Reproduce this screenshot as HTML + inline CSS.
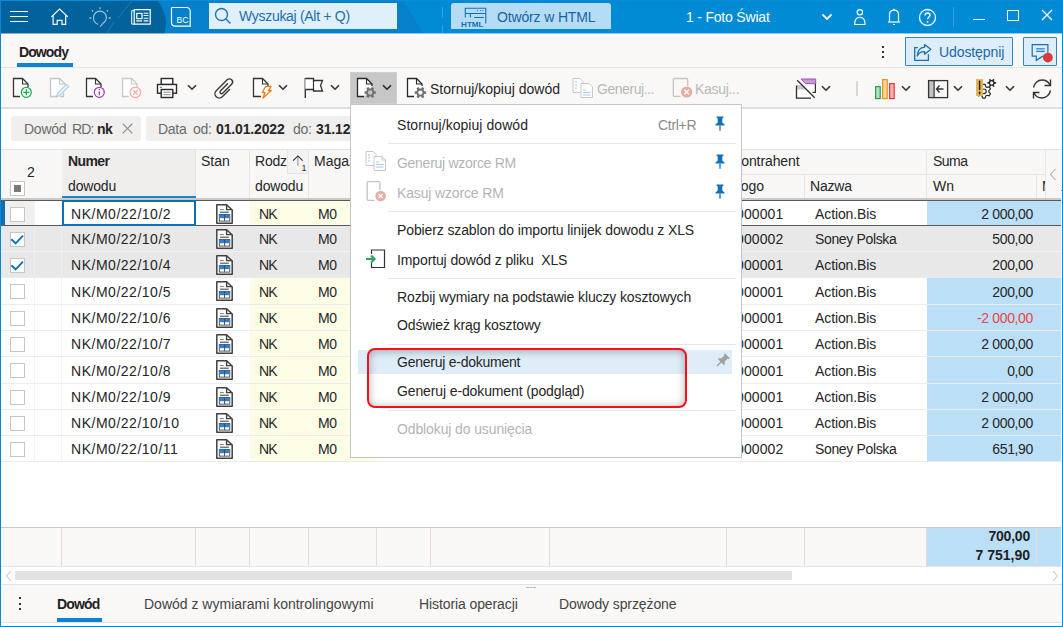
<!DOCTYPE html>
<html><head><meta charset="utf-8">
<style>
*{box-sizing:border-box;margin:0;padding:0}
html,body{width:1063px;height:627px;overflow:hidden;background:#fff;font-family:"Liberation Sans",sans-serif;font-size:14px;color:#262626}
.a{position:absolute}
.t{position:absolute;white-space:nowrap;line-height:1}
svg{position:absolute;overflow:visible}
</style></head><body>
<!-- window borders -->
<div class="a" style="left:0;top:0;width:1px;height:627px;background:#0a86d6;z-index:50"></div>
<div class="a" style="left:1062px;top:0;width:1px;height:627px;background:#0a86d6;z-index:50"></div>
<div class="a" style="left:0;top:626px;width:1063px;height:1px;background:#0a86d6;z-index:50"></div>

<!-- TOP BAR -->
<div class="a" style="left:0;top:0;width:1063px;height:33px;background:#008bd4"></div><div class="a" style="left:0;top:33px;width:1063px;height:1px;background:#8cc8ec"></div>
<svg style="left:0;top:0" width="430" height="34"><path d="M0 0 H403 L422.5 33 H0 Z" fill="#0680c8"/><path d="M0 1 H158 C163 8 166 16 166 22 C166 27 165 30 164.5 33 H0 Z" fill="#02629b"/><path d="M0 33 H164.5 V34 H0 Z" fill="#84aecb"/>
<path d="M132 1 L118 18 M114 22 L107 33" stroke="#2a78ad" stroke-width="1"/></svg>
<div class="a" style="left:0;top:0;width:1063px;height:1px;background:#0a8ad8"></div>
<!-- hamburger -->
<div class="a" style="left:10px;top:11px;width:18px;height:1px;background:#fff"></div>
<div class="a" style="left:10px;top:16px;width:18px;height:1px;background:#fff"></div>
<div class="a" style="left:10px;top:21px;width:18px;height:1px;background:#fff"></div>

<!-- home -->
<svg style="left:44px;top:2px" width="30" height="30" viewBox="0 0 30 30"><path d="M7.3 14.8 L15.6 7.1 L23.9 14.8 M9.1 13.3 V22.4 H13.2 V18.3 H18 V22.4 H21.7 V13.3" fill="none" stroke="#fff" stroke-width="1.15" stroke-linejoin="miter"/></svg>
<!-- lightbulb -->
<svg style="left:84px;top:2px" width="32" height="30" viewBox="0 0 32 30"><g fill="none" stroke="#9ac2dd" stroke-width="1.15"><path d="M14.2 22.4 C11.3 21.6 9.5 18.9 9.5 15.6 C9.5 12 12.4 9.1 15.9 9.1 C19.5 9.1 22.4 12 22.4 15.6 C22.4 18 21 20 19 21.2 L16.2 24.6"/></g><g stroke="#9ac2dd" stroke-width="1.3"><path d="M15.9 5.2 V7.3 M8 8.2 L9.1 9.5 M23.9 8.2 L22.8 9.5 M5.4 16 H7.4 M24.6 16 H26.6"/></g></svg>
<!-- news -->
<svg style="left:124px;top:2px" width="30" height="30" viewBox="0 0 30 30"><g fill="none" stroke="#fff" stroke-width="1.2"><path d="M10.2 7.7 H26.2 V22.1 H10.2 Z"/><path d="M10.2 8.7 H7.7 V22.1 H10.2" stroke-width="1"/><rect x="12.8" y="11.4" width="5.2" height="5.2"/><path d="M19.6 11.2 H24.4 M19.6 13.5 H24.4 M19.6 16.3 H24.4 M12.2 18.9 H18 M19.6 18.9 H24.4" stroke-width="1.1"/></g></svg>
<!-- BC -->
<svg style="left:170px;top:6px" width="22" height="22" viewBox="0 0 22 22"><path d="M2.6 1.5 H16.3 C18.7 1.5 20.2 3 20.2 5.4 V20.1 H5.4 C3 20.1 1.5 18.6 1.5 16.2 V2.6 C1.5 1.9 1.9 1.5 2.6 1.5 Z" fill="none" stroke="#fff" stroke-width="1.2"/><text x="6.4" y="16.6" font-family="Liberation Sans" font-size="9" fill="#fff" textLength="12" lengthAdjust="spacingAndGlyphs">BC</text></svg>
<!-- search -->
<div class="a" style="left:209px;top:3px;width:188px;height:26px;background:#dff0fb"></div>
<svg style="left:214px;top:7px" width="18" height="18" viewBox="0 0 18 18"><circle cx="7.5" cy="7.5" r="6" fill="none" stroke="#1f74b6" stroke-width="1.4"/><path d="M12 12 L16.5 16.5" stroke="#1f74b6" stroke-width="1.5"/></svg>
<div class="t" style="left:239px;top:9px;font-size:14px;color:#1e6fae;letter-spacing:-0.3px">Wyszukaj (Alt + Q)</div>

<div class="a" style="left:442px;top:7px;width:1px;height:11px;background:#3ba0de"></div><div class="a" style="left:442px;top:25px;width:1px;height:8px;background:#3ba0de"></div>
<!-- Otworz w HTML -->
<div class="a" style="left:451px;top:3px;width:160px;height:26px;background:#b5dcf4;border-radius:3px 3px 0 0"></div>
<svg style="left:455px;top:3px" width="40" height="28" viewBox="0 0 40 28"><g fill="none" stroke="#1070b5" stroke-width="1.1"><path d="M10.3 14.5 V5.3 H30.8 V20.5"/><path d="M10.3 10.5 H30.8 M15.4 10.5 V14.5 M19.2 14.5 H28.8"/></g><g fill="#1070b5"><circle cx="22.5" cy="7.6" r="0.55"/><circle cx="25.5" cy="7.6" r="0.55"/><circle cx="27.8" cy="7.6" r="0.55"/></g><text x="6" y="23.7" font-family="Liberation Sans" font-size="7.8" font-weight="700" fill="#1070b5" textLength="22.6" lengthAdjust="spacingAndGlyphs">HTML</text></svg>
<div class="t" style="left:497px;top:10px;font-size:14px;color:#1565a3;letter-spacing:-0.15px">Otwórz w HTML</div>
<!-- company -->
<div class="t" style="left:686px;top:10px;font-size:14px;color:#fff;letter-spacing:-0.2px">1 - Foto Świat</div>
<svg style="left:821px;top:13px" width="12" height="8" viewBox="0 0 12 8"><path d="M1.5 1.5 L6 6 L10.5 1.5" fill="none" stroke="#fff" stroke-width="1.8"/></svg>
<!-- person -->
<svg style="left:848px;top:5px" width="20" height="22" viewBox="0 0 20 22"><g fill="none" stroke="#fff" stroke-width="1.15"><circle cx="11.85" cy="7.3" r="2.7"/><path d="M6.6 19.5 C6.6 15 8.6 12.3 11.9 12.3 C15.2 12.3 17.1 15 17.1 19.5 Z"/></g></svg>
<!-- bell -->
<svg style="left:884px;top:5px" width="20" height="22" viewBox="0 0 20 22"><g fill="none" stroke="#fff" stroke-width="1.15"><path d="M5.5 16.8 V9.5 C5.5 6.5 7.5 5.1 10 5.1 C12.5 5.1 14.5 6.5 14.5 9.5 V16.8"/></g><path d="M4 16.4 H16 V17.6 H4 Z" fill="#fff"/><path d="M10 3.6 L10.9 5 H9.1 Z" fill="#fff"/><path d="M9 19.5 H11" stroke="#fff" stroke-width="1"/></svg>
<!-- help -->
<svg style="left:918px;top:8px" width="19" height="19" viewBox="0 0 19 19"><circle cx="9.5" cy="9.5" r="8" fill="none" stroke="#fff" stroke-width="1.3"/><path d="M7 7.5 C7 5.8 8 5 9.5 5 C11 5 12 5.8 12 7.2 C12 8.8 9.6 9.3 9.6 11.3" fill="none" stroke="#fff" stroke-width="1.3"/><circle cx="9.6" cy="13.8" r="0.9" fill="#fff"/></svg>
<div class="a" style="left:953px;top:7px;width:1px;height:20px;background:#3a9ddc"></div>
<!-- window controls -->
<div class="a" style="left:973px;top:19px;width:12px;height:1px;background:#fff"></div>
<div class="a" style="left:1007px;top:10px;width:12px;height:11px;border:1.3px solid #fff"></div>
<svg style="left:1041px;top:9px" width="12" height="12" viewBox="0 0 12 12"><path d="M1 1 L11 11 M11 1 L1 11" stroke="#fff" stroke-width="1.3"/></svg>

<!-- TAB ROW -->
<div class="a" style="left:1px;top:34px;width:1061px;height:73px;background:#f9f8f7"></div><div class="a" style="left:1px;top:34px;width:1061px;height:1px;background:#fffdf9"></div>
<div class="a" style="left:1px;top:67px;width:1061px;height:1px;background:#e6e5e4"></div>
<div class="t" style="left:19px;top:45px;font-size:14px;font-weight:700;color:#212121;letter-spacing:-0.9px">Dowody</div>
<div class="a" style="left:17px;top:63px;width:56px;height:4px;background:#0a84d2"></div>
<!-- kebab -->
<div class="a" style="left:882px;top:46px;width:2px;height:2px;background:#333"></div>
<div class="a" style="left:882px;top:51px;width:2px;height:2px;background:#333"></div>
<div class="a" style="left:882px;top:56px;width:2px;height:2px;background:#333"></div>
<!-- Udostepnij -->
<div class="a" style="left:905px;top:37px;width:108px;height:29px;background:#ddeefa;border:1px solid #2f86c4;border-radius:1px"></div>
<svg style="left:905px;top:36px" width="30" height="30" viewBox="0 0 30 30"><g fill="none" stroke="#1a6fb0" stroke-width="1.3" stroke-linejoin="miter"><path d="M12.8 11.6 H9.7 V24.4 H23.4 V18.2"/><path d="M19.6 8.6 L25.8 13.3 L19.6 18.2 V15.6 C16 15.4 13.7 16.6 12.3 20 C12.5 15 15.2 11.6 19.6 11.2 Z" stroke-linejoin="round"/></g></svg>
<div class="t" style="left:939px;top:45px;font-size:14px;color:#1a68a8;letter-spacing:-0.1px">Udostępnij</div>
<!-- chat -->
<div class="a" style="left:1023px;top:37px;width:34px;height:29px;background:#ddeefa;border:1px solid #2f86c4;border-radius:1px"></div>
<svg style="left:1030px;top:43px" width="24" height="22" viewBox="0 0 24 22"><g fill="none" stroke="#1a6fb0" stroke-width="1.2" stroke-linejoin="miter"><path d="M2.2 1.6 H17.9 V13.2 H12.8 L6.3 17.3 V13.2 H2.2 Z"/></g><path d="M6.2 5.9 H14.8 M6.2 8.4 H14.8" stroke="#2a7bbb" stroke-width="1.1"/><circle cx="17.9" cy="14.6" r="4.9" fill="#d93a3a"/></svg>

<!-- TOOLBAR -->
<div class="a" style="left:1px;top:107px;width:1061px;height:2px;background:#dfdfdf"></div>


<!-- TOOLBAR -->
<div class="a" style="left:1px;top:107px;width:1061px;height:2px;background:#dfdfdf;"></div>
<svg style="left:12px;top:77px;" width="24" height="22" viewBox="0 0 24 22"><path d="M8 19.5 H1.5 V1.5 H10.5 L16 7 V10" fill="#fff" stroke="#333" stroke-width="1.3"/><path d="M10.5 1.5 V7 H16" fill="none" stroke="#333" stroke-width="1.1"/><circle cx="14.3" cy="15.3" r="5" fill="#fff" stroke="#1aaa4a" stroke-width="1.2"/><path d="M14.3 12.3 V18.3 M11.3 15.3 H17.3" stroke="#1aaa4a" stroke-width="1.35"/></svg>
<svg style="left:49px;top:77px;" width="24" height="22" viewBox="0 0 24 22"><path d="M7 19.5 H1.5 V1.5 H10.5 L16 7 V8 M11 19.5 H14.5 V16" fill="#fff" stroke="#c4c4c4" stroke-width="1.3"/><path d="M10.5 1.5 V7 H16" fill="none" stroke="#c4c4c4" stroke-width="1.1"/><path d="M7.5 20 L8.5 16.5 L17.5 7.5 L19.5 9.5 L10.5 18.5 Z" fill="#fff" stroke="#a9d0ee" stroke-width="1.3" stroke-linejoin="round"/></svg>
<svg style="left:85px;top:77px;" width="24" height="22" viewBox="0 0 24 22"><path d="M8 19.5 H1.5 V1.5 H10.5 L16 7 V10" fill="#fff" stroke="#333" stroke-width="1.3"/><path d="M10.5 1.5 V7 H16" fill="none" stroke="#333" stroke-width="1.1"/><circle cx="14.3" cy="15.3" r="5" fill="#fff" stroke="#a23db5" stroke-width="1.2"/><path d="M14.3 14.3 V18.2" stroke="#a23db5" stroke-width="1.3"/><circle cx="14.3" cy="12.6" r="0.75" fill="#a23db5"/></svg>
<svg style="left:121px;top:77px;" width="24" height="22" viewBox="0 0 24 22"><path d="M8 19.5 H1.5 V1.5 H10.5 L16 7 V10" fill="#fff" stroke="#c8c8c8" stroke-width="1.3"/><path d="M10.5 1.5 V7 H16" fill="none" stroke="#c8c8c8" stroke-width="1.1"/><circle cx="14.4" cy="15.4" r="5.2" fill="#fff" stroke="#f2a9a9" stroke-width="1.3"/><path d="M12.2 13.2 L16.6 17.6 M16.6 13.2 L12.2 17.6" stroke="#f2a9a9" stroke-width="1.3"/></svg>
<svg style="left:156px;top:77px;" width="22" height="22" viewBox="0 0 22 22"><g fill="#fff" stroke="#2b2b2b" stroke-width="1.4"><rect x="5.2" y="1.5" width="11.6" height="6"/><rect x="1.5" y="7.5" width="19" height="8.7"/><rect x="5.2" y="12.5" width="11.6" height="8"/></g><path d="M7.3 15.2 H14.7 M7.3 17.7 H14.7" stroke="#8a8a8a" stroke-width="1"/><rect x="3.8" y="9.8" width="2" height="1.1" fill="#1e7fd0"/></svg>
<svg style="left:187px;top:84px;" width="10" height="7" viewBox="0 0 10 7"><path d="M1 1.2 L5 5.2 L9 1.2" fill="none" stroke="#333" stroke-width="1.6"/></svg>
<svg style="left:210px;top:74px;" width="30" height="28" viewBox="0 0 30 28"><path transform="matrix(0.7071 0.7071 -0.7071 0.7071 19.4 3.6)" d="M8.6 8.35 V18.6 A4.3 4.3 0 0 1 0 18.6 V3.15 A3.15 3.15 0 0 1 6.3 3.15 V15.85 A1.6 1.6 0 0 1 3.1 15.85 V5.75" fill="none" stroke="#3a3a3a" stroke-width="1.4" stroke-linecap="round"/></svg>
<svg style="left:252px;top:77px;" width="22" height="22" viewBox="0 0 22 22"><path d="M9 19.5 H1.5 V1.5 H10.5 L16 7 V9" fill="#fff" stroke="#333" stroke-width="1.3"/><path d="M10.5 1.5 V7 H16" fill="none" stroke="#333" stroke-width="1.1"/><path d="M13.5 9.5 H19 L16.5 13.5 H19.3 L11 21 L13 15.5 H10.3 Z" fill="#fff" stroke="#ee7d1e" stroke-width="1.3" stroke-linejoin="round"/></svg>
<svg style="left:278px;top:84px;" width="10" height="7" viewBox="0 0 10 7"><path d="M1 1.2 L5 5.2 L9 1.2" fill="none" stroke="#333" stroke-width="1.6"/></svg>
<svg style="left:303px;top:77px;" width="22" height="22" viewBox="0 0 22 22"><path d="M2.3 1 V21" stroke="#333" stroke-width="1.4"/><path d="M2.3 1.5 H10.5 V3.5 H19.5 L17.5 8.5 L19.5 14 H10.5 V12.5 H2.3" fill="#fff" stroke="#333" stroke-width="1.3" stroke-linejoin="miter"/><path d="M10.5 3.5 V12.5" stroke="#333" stroke-width="1.2"/></svg>
<svg style="left:330px;top:84px;" width="10" height="7" viewBox="0 0 10 7"><path d="M1 1.2 L5 5.2 L9 1.2" fill="none" stroke="#333" stroke-width="1.6"/></svg>
<div class="a" style="left:350px;top:72px;width:47px;height:32px;background:#c7c7c7;border:1px solid #cfcfcf"></div>
<svg style="left:356px;top:77px;" width="24" height="24" viewBox="0 0 24 24"><path d="M8 19.5 H1.5 V1.5 H10.5 L16 7 V9" fill="#fff" stroke="#262626" stroke-width="1.3"/><path d="M10.5 1.5 V7 H16" fill="none" stroke="#262626" stroke-width="1.1"/><g transform="translate(14.2 15.5)"><circle r="3.1" fill="none" stroke="#707070" stroke-width="1.7999999999999998"/><rect x="-1.25" y="-5.7" width="2.5" height="2.3000000000000003" fill="#707070" transform="rotate(30.0)"/><rect x="-1.25" y="-5.7" width="2.5" height="2.3000000000000003" fill="#707070" transform="rotate(90.0)"/><rect x="-1.25" y="-5.7" width="2.5" height="2.3000000000000003" fill="#707070" transform="rotate(150.0)"/><rect x="-1.25" y="-5.7" width="2.5" height="2.3000000000000003" fill="#707070" transform="rotate(210.0)"/><rect x="-1.25" y="-5.7" width="2.5" height="2.3000000000000003" fill="#707070" transform="rotate(270.0)"/><rect x="-1.25" y="-5.7" width="2.5" height="2.3000000000000003" fill="#707070" transform="rotate(330.0)"/></g></svg>
<svg style="left:382px;top:84px;" width="10" height="7" viewBox="0 0 10 7"><path d="M1 1.2 L5 5.2 L9 1.2" fill="none" stroke="#262626" stroke-width="1.6"/></svg>
<svg style="left:406px;top:77px;" width="24" height="24" viewBox="0 0 24 24"><path d="M8 19.5 H1.5 V1.5 H10.5 L16 7 V9" fill="#fff" stroke="#262626" stroke-width="1.3"/><path d="M10.5 1.5 V7 H16" fill="none" stroke="#262626" stroke-width="1.1"/><g transform="translate(14.4 15.6)"><circle r="3.1" fill="none" stroke="#707070" stroke-width="1.7999999999999998"/><rect x="-1.25" y="-5.7" width="2.5" height="2.3000000000000003" fill="#707070" transform="rotate(30.0)"/><rect x="-1.25" y="-5.7" width="2.5" height="2.3000000000000003" fill="#707070" transform="rotate(90.0)"/><rect x="-1.25" y="-5.7" width="2.5" height="2.3000000000000003" fill="#707070" transform="rotate(150.0)"/><rect x="-1.25" y="-5.7" width="2.5" height="2.3000000000000003" fill="#707070" transform="rotate(210.0)"/><rect x="-1.25" y="-5.7" width="2.5" height="2.3000000000000003" fill="#707070" transform="rotate(270.0)"/><rect x="-1.25" y="-5.7" width="2.5" height="2.3000000000000003" fill="#707070" transform="rotate(330.0)"/></g></svg>
<div class="t" style="left:430px;top:82px;color:#262626;">Stornuj/kopiuj dowód</div>
<svg style="left:572px;top:78px;" width="22" height="21" viewBox="0 0 22 21"><path d="M8.5 14.5 H1 V0.5 H8 L11 3.5 V5" fill="#fff" stroke="#c8c8c8" stroke-width="1"/><path d="M9 5.5 H17 L20.5 9 V19.5 H9 Z" fill="#fff" stroke="#c8c8c8" stroke-width="1"/><path d="M3 4 H5 M3 7 H5 M3 10 H5" stroke="#a8c8e8" stroke-width="1"/><path d="M11 12 H14 M11 14.5 H18.5 M11 17 H18.5" stroke="#a8c8e8" stroke-width="1.1"/></svg>
<div class="t" style="left:597px;top:82px;color:#b8b8b8;letter-spacing:-0.45px;">Generuj...</div>
<svg style="left:672px;top:77px;" width="22" height="22" viewBox="0 0 22 22"><path d="M8.5 19.3 H2.5 C1.7 19.3 1.3 18.9 1.3 18 V2.7 C1.3 1.9 1.7 1.5 2.5 1.5 H14.5 C15.3 1.5 15.7 1.9 15.7 2.7 V9" fill="none" stroke="#c4c4c4" stroke-width="1.3"/><circle cx="14.6" cy="15" r="5.6" fill="#e9aba4"/><path d="M12.4 12.8 L16.8 17.2 M16.8 12.8 L12.4 17.2" stroke="#fff" stroke-width="1.4"/></svg>
<div class="t" style="left:695px;top:82px;color:#b8b8b8;letter-spacing:-0.3px;">Kasuj...</div>
<svg style="left:795px;top:78px;" width="22" height="22" viewBox="0 0 22 22"><path d="M1.5 7 V20 H20 V1.5 H6 Z" fill="#fff"/><path d="M1.5 7 H7.5 L11 11.5 H1.5 Z" fill="#c8c8c8"/><path d="M1.5 7.5 V20.1 H16" fill="none" stroke="#2d2d2d" stroke-width="1.3"/><path d="M20.4 5.5 V14.4 H17.5" fill="none" stroke="#2d2d2d" stroke-width="1.2"/><path d="M6.2 1 H20.7 V5.7 H10.5 Z" fill="#c99bd2" stroke="#a040b0" stroke-width="0.9"/><path d="M2.2 2.2 L19.7 19.7" stroke="#2d2d2d" stroke-width="1.25"/></svg>
<svg style="left:821px;top:85px;" width="10" height="7" viewBox="0 0 10 7"><path d="M1 1.2 L5 5.2 L9 1.2" fill="none" stroke="#333" stroke-width="1.6"/></svg>
<div class="a" style="left:856px;top:81px;width:2px;height:15px;background:#d6d6d6;"></div>
<svg style="left:874px;top:78px;" width="22" height="22" viewBox="0 0 22 22"><rect x="1.6" y="8.6" width="4.6" height="12" fill="#b5dfbf" stroke="#1fa64a" stroke-width="1.2"/><rect x="8.6" y="1.6" width="4.6" height="19" fill="#fbd98c" stroke="#ef8b2c" stroke-width="1.2"/><rect x="15.6" y="5.6" width="4.6" height="15" fill="#f4b0b0" stroke="#e03a3a" stroke-width="1.2"/></svg>
<svg style="left:901px;top:85px;" width="10" height="7" viewBox="0 0 10 7"><path d="M1 1.2 L5 5.2 L9 1.2" fill="none" stroke="#333" stroke-width="1.6"/></svg>
<svg style="left:927px;top:79px;" width="22" height="20" viewBox="0 0 22 20"><rect x="1.6" y="1.6" width="5.5" height="17" fill="#c4c4c4"/><rect x="1.6" y="1.6" width="19" height="17" fill="none" stroke="#333" stroke-width="1.3"/><path d="M7.1 1.6 V18.6" stroke="#333" stroke-width="1.2"/><path d="M9.5 10 H16.5 M12.5 6.5 L9.5 10 L12.5 13.5" fill="none" stroke="#333" stroke-width="1.3"/></svg>
<svg style="left:953px;top:85px;" width="10" height="7" viewBox="0 0 10 7"><path d="M1 1.2 L5 5.2 L9 1.2" fill="none" stroke="#333" stroke-width="1.6"/></svg>
<svg style="left:975px;top:78px;" width="24" height="22" viewBox="0 0 24 22"><path d="M7.03 8.66 L7.68 6.41 L10.12 6.41 L10.77 8.66 L11.98 9.36 L14.26 8.80 L15.48 10.91 L13.85 12.60 L13.85 14.00 L15.48 15.69 L14.26 17.80 L11.98 17.24 L10.77 17.94 L10.12 20.19 L7.68 20.19 L7.03 17.94 L5.82 17.24 L3.54 17.80 L2.32 15.69 L3.95 14.00 L3.95 12.60 L2.32 10.91 L3.54 8.80 L5.82 9.36 Z" fill="#fff" stroke="#2a2a2a" stroke-width="1.2" stroke-linejoin="round"/><circle cx="8.9" cy="13.3" r="2.3" fill="none" stroke="#2a2a2a" stroke-width="1.2"/><rect x="1" y="1.1" width="7.1" height="16.8" fill="#e3b558"/><path d="M4.6 3.2 V11.5" stroke="#262626" stroke-width="1.5" stroke-linecap="round"/><path d="M4.6 14.3 V15.8" stroke="#262626" stroke-width="1.5" stroke-linecap="round"/><path d="M17.22 1.95 L18.42 0.85 L19.35 1.39 L19.00 2.97 L19.52 3.87 L21.07 4.36 L21.07 5.44 L19.52 5.93 L19.00 6.83 L19.35 8.41 L18.42 8.95 L17.22 7.85 L16.18 7.85 L14.98 8.95 L14.05 8.41 L14.40 6.83 L13.88 5.93 L12.33 5.44 L12.33 4.36 L13.88 3.87 L14.40 2.97 L14.05 1.39 L14.98 0.85 L16.18 1.95 Z" fill="#2a2a2a"/><circle cx="16.7" cy="4.9" r="1.6" fill="#f9f8f7"/></svg>
<svg style="left:1005px;top:85px;" width="10" height="7" viewBox="0 0 10 7"><path d="M1 1.2 L5 5.2 L9 1.2" fill="none" stroke="#333" stroke-width="1.6"/></svg>
<svg style="left:1031px;top:78px;" width="22" height="22" viewBox="0 0 22 22"><g fill="none" stroke="#333" stroke-width="1.4"><path d="M2.5 9.5 C3.3 5.3 6.8 2 11 2 C14.5 2 17.5 4 19 7 M19.5 1.5 V7.5 H13.5"/><path d="M19.5 12.5 C18.7 16.7 15.2 20 11 20 C7.5 20 4.5 18 3 15 M2.5 20.5 V14.5 H8.5"/></g></svg>

<!-- CHIPS -->
<div class="a" style="left:11px;top:116px;width:130px;height:25px;background:#f0efee;border-radius:3px"></div>
<div class="t" style="left:24px;top:122px;color:#6b6b6b;letter-spacing:-0.25px;">Dowód</div>
<div class="t" style="left:72px;top:122px;color:#6b6b6b;letter-spacing:-0.8px;">RD:</div>
<div class="t" style="left:97px;top:122px;color:#262626;letter-spacing:-0.5px;font-weight:700;">nk</div>
<svg style="left:122px;top:123px;" width="11" height="11" viewBox="0 0 11 11"><path d="M0.7 0.7 L10.3 10.3 M10.3 0.7 L0.7 10.3" stroke="#8a8a8a" stroke-width="1.2"/></svg>
<div class="a" style="left:146px;top:116px;width:215px;height:25px;background:#f0efee;border-radius:3px"></div>
<div class="t" style="left:158px;top:122px;color:#6b6b6b;letter-spacing:-0.3px;">Data</div>
<div class="t" style="left:193px;top:122px;color:#6b6b6b;letter-spacing:-0.3px;">od:</div>
<div class="t" style="left:216px;top:122px;color:#262626;letter-spacing:-0.15px;font-weight:700;">01.01.2022</div>
<div class="t" style="left:293px;top:122px;color:#6b6b6b;letter-spacing:-0.3px;">do:</div>
<div class="t" style="left:316px;top:122px;color:#262626;letter-spacing:-0.15px;font-weight:700;">31.12.2022</div>

<!-- TABLE HEADER -->
<div class="a" style="left:1px;top:149px;width:1061px;height:1px;background:#e2e2e2;"></div>
<div class="a" style="left:1px;top:150px;width:1060px;height:48px;background:#f8f7f6;"></div>
<div class="a" style="left:62px;top:150px;width:134px;height:46px;background:#efeeed;"></div>
<div class="a" style="left:62px;top:196px;width:134px;height:2px;background:#1a84cf;"></div>
<div class="a" style="left:1px;top:198px;width:1060px;height:2px;background:#c9c9c9;"></div>
<div class="a" style="left:195px;top:150px;width:1px;height:46px;background:#e6e5e4;"></div>
<div class="a" style="left:249px;top:150px;width:1px;height:48px;background:#e6e5e4;"></div>
<div class="a" style="left:308px;top:150px;width:1px;height:48px;background:#e6e5e4;"></div>
<div class="a" style="left:804px;top:175px;width:1px;height:23px;background:#e6e5e4;"></div>
<div class="a" style="left:926px;top:150px;width:1px;height:48px;background:#e6e5e4;"></div>
<div class="a" style="left:1036px;top:175px;width:1px;height:23px;background:#e6e5e4;"></div>
<div class="a" style="left:726px;top:174px;width:320px;height:1px;background:#e6e5e4;"></div>
<div class="t" style="left:27px;top:165px;color:#262626;">2</div>
<div class="a" style="left:10px;top:181px;width:15px;height:15px;background:#fff;border:1px solid #c6c6c6"></div>
<div class="a" style="left:14px;top:185px;width:7px;height:7px;background:#7a7a7a;"></div>
<div class="t" style="left:68px;top:154px;color:#262626;letter-spacing:-0.6px;font-weight:700;">Numer</div>
<div class="t" style="left:68px;top:179px;color:#262626;letter-spacing:-0.15px;">dowodu</div>
<div class="t" style="left:201px;top:154px;color:#262626;">Stan</div>
<div class="t" style="left:255px;top:154px;color:#262626;letter-spacing:-0.2px;">Rodz</div>
<div class="t" style="left:255px;top:179px;color:#262626;letter-spacing:-0.15px;">dowodu</div>
<div class="a" style="left:287px;top:150px;width:21px;height:24px;background:#f4f3f2;border-left:1px solid #e6e5e4;border-bottom:1px solid #e6e5e4"></div>
<svg style="left:291px;top:153px;" width="16" height="19" viewBox="0 0 16 19"><path d="M6.9 3.2 V12.7" stroke="#9a9a9a" stroke-width="1.1"/><path d="M2.1 7.6 L6.9 2.9 L11.7 7.6" fill="none" stroke="#2a2a2a" stroke-width="1.1"/><text x="10.6" y="17.7" font-family="Liberation Sans" font-size="9" fill="#2a2a2a">1</text></svg>
<div class="t" style="left:314px;top:154px;color:#262626;">Magazyn</div>
<div class="t" style="left:732px;top:154px;color:#262626;letter-spacing:-0.1px;">Kontrahent</div>
<div class="t" style="left:733px;top:179px;color:#262626;">Logo</div>
<div class="t" style="left:810px;top:179px;color:#262626;letter-spacing:-0.2px;">Nazwa</div>
<div class="t" style="left:933px;top:154px;color:#262626;letter-spacing:-0.5px;">Suma</div>
<div class="t" style="left:933px;top:179px;color:#262626;">Wn</div>
<div class="t" style="left:1042px;top:179px;color:#262626;">Ma</div>
<div class="a" style="left:1045px;top:150px;width:16px;height:48px;background:#f8f7f6;border-left:1px solid #e6e5e4"></div>
<svg style="left:1049px;top:168px;" width="8" height="13" viewBox="0 0 8 13"><path d="M6.5 1 L1.5 6.5 L6.5 12" fill="none" stroke="#b0b0b0" stroke-width="1.1"/></svg>

<!-- ROWS -->
<div class="a" style="left:250px;top:201px;width:127px;height:24px;background:#fdfde6;"></div>
<div class="a" style="left:927px;top:201px;width:134px;height:24px;background:#bcdff8;"></div>
<div class="a" style="left:5px;top:201px;width:30px;height:24px;background:#f0efee;"></div>
<div class="a" style="left:1px;top:201px;width:4px;height:24px;background:#0f6fb5;"></div>
<div class="a" style="left:1px;top:225px;width:1060px;height:1px;background:#5a5a5a;"></div>
<div class="a" style="left:34px;top:201px;width:1px;height:24px;background:#f3f3f3;"></div>
<div class="a" style="left:61px;top:201px;width:1px;height:24px;background:#f3f3f3;"></div>
<div class="a" style="left:10px;top:207px;width:15px;height:15px;background:#fff;border:1px solid #c6c6c6"></div>
<div class="t" style="left:71px;top:207px;color:#262626;letter-spacing:0.52px;">NK/M0/22/10/2</div>
<svg style="left:216px;top:204px;" width="17" height="20" viewBox="0 0 17 20"><path d="M0.8 0.8 H10.6 L16.2 6 V19.2 H0.8 Z" fill="#fff" stroke="#404040" stroke-width="1.5" stroke-linejoin="round"/><path d="M10.6 0.8 V5.6 H16.2" fill="none" stroke="#404040" stroke-width="1.4"/><path d="M4 5.6 H7.8" stroke="#7a7a7a" stroke-width="1"/><path d="M4 8.3 H12.8" stroke="#7a7a7a" stroke-width="1.6"/><rect x="3.3" y="10.5" width="10.5" height="6.6" fill="#fff" stroke="#454545" stroke-width="0.9"/><rect x="3.3" y="10.5" width="10.5" height="3.7" fill="#2f7fcf"/><path d="M8.55 10.5 V17.1" stroke="#454545" stroke-width="0.9"/></svg>
<div class="t" style="left:259px;top:207px;color:#262626;letter-spacing:-0.75px;">NK</div>
<div class="t" style="left:318px;top:207px;color:#262626;letter-spacing:-0.5px;">M0</div>
<div class="t" style="left:736px;top:207px;color:#262626;letter-spacing:0.1px;">000001</div>
<div class="t" style="left:815px;top:207px;color:#262626;letter-spacing:-0.1px;">Action.Bis</div>
<div class="t" style="right:30px;top:207px;color:#262626;letter-spacing:-0.35px;">2 000,00</div>
<div class="a" style="left:1px;top:226px;width:1060px;height:25px;background:#e8e8e8;"></div>
<div class="a" style="left:1px;top:251px;width:1060px;height:1px;background:#f3f3f3;"></div>
<div class="a" style="left:34px;top:226px;width:1px;height:25px;background:#efefef;"></div>
<div class="a" style="left:61px;top:226px;width:1px;height:25px;background:#efefef;"></div>
<div class="a" style="left:10px;top:232px;width:15px;height:15px;background:#fff;border:1px solid #c6c6c6"></div>
<svg style="left:10px;top:233px;" width="15" height="14" viewBox="0 0 15 14"><path d="M1.3 6.2 L5.6 10.3 L13 2.6" fill="none" stroke="#1670b8" stroke-width="1.9"/></svg>
<div class="t" style="left:71px;top:232px;color:#262626;letter-spacing:0.52px;">NK/M0/22/10/3</div>
<svg style="left:216px;top:229px;" width="17" height="20" viewBox="0 0 17 20"><path d="M0.8 0.8 H10.6 L16.2 6 V19.2 H0.8 Z" fill="#fff" stroke="#404040" stroke-width="1.5" stroke-linejoin="round"/><path d="M10.6 0.8 V5.6 H16.2" fill="none" stroke="#404040" stroke-width="1.4"/><path d="M4 5.6 H7.8" stroke="#7a7a7a" stroke-width="1"/><path d="M4 8.3 H12.8" stroke="#7a7a7a" stroke-width="1.6"/><rect x="3.3" y="10.5" width="10.5" height="6.6" fill="#fff" stroke="#454545" stroke-width="0.9"/><rect x="3.3" y="10.5" width="10.5" height="3.7" fill="#2f7fcf"/><path d="M8.55 10.5 V17.1" stroke="#454545" stroke-width="0.9"/></svg>
<div class="t" style="left:259px;top:232px;color:#262626;letter-spacing:-0.75px;">NK</div>
<div class="t" style="left:318px;top:232px;color:#262626;letter-spacing:-0.5px;">M0</div>
<div class="t" style="left:736px;top:232px;color:#262626;letter-spacing:0.1px;">000002</div>
<div class="t" style="left:815px;top:232px;color:#262626;letter-spacing:-0.35px;">Soney Polska</div>
<div class="t" style="right:30px;top:232px;color:#262626;letter-spacing:-0.35px;">500,00</div>
<div class="a" style="left:1px;top:252px;width:1060px;height:25px;background:#e8e8e8;"></div>
<div class="a" style="left:1px;top:277px;width:1060px;height:1px;background:#ececec;"></div>
<div class="a" style="left:34px;top:252px;width:1px;height:25px;background:#efefef;"></div>
<div class="a" style="left:61px;top:252px;width:1px;height:25px;background:#efefef;"></div>
<div class="a" style="left:10px;top:258px;width:15px;height:15px;background:#fff;border:1px solid #c6c6c6"></div>
<svg style="left:10px;top:259px;" width="15" height="14" viewBox="0 0 15 14"><path d="M1.3 6.2 L5.6 10.3 L13 2.6" fill="none" stroke="#1670b8" stroke-width="1.9"/></svg>
<div class="t" style="left:71px;top:258px;color:#262626;letter-spacing:0.52px;">NK/M0/22/10/4</div>
<svg style="left:216px;top:255px;" width="17" height="20" viewBox="0 0 17 20"><path d="M0.8 0.8 H10.6 L16.2 6 V19.2 H0.8 Z" fill="#fff" stroke="#404040" stroke-width="1.5" stroke-linejoin="round"/><path d="M10.6 0.8 V5.6 H16.2" fill="none" stroke="#404040" stroke-width="1.4"/><path d="M4 5.6 H7.8" stroke="#7a7a7a" stroke-width="1"/><path d="M4 8.3 H12.8" stroke="#7a7a7a" stroke-width="1.6"/><rect x="3.3" y="10.5" width="10.5" height="6.6" fill="#fff" stroke="#454545" stroke-width="0.9"/><rect x="3.3" y="10.5" width="10.5" height="3.7" fill="#2f7fcf"/><path d="M8.55 10.5 V17.1" stroke="#454545" stroke-width="0.9"/></svg>
<div class="t" style="left:259px;top:258px;color:#262626;letter-spacing:-0.75px;">NK</div>
<div class="t" style="left:318px;top:258px;color:#262626;letter-spacing:-0.5px;">M0</div>
<div class="t" style="left:736px;top:258px;color:#262626;letter-spacing:0.1px;">000001</div>
<div class="t" style="left:815px;top:258px;color:#262626;letter-spacing:-0.1px;">Action.Bis</div>
<div class="t" style="right:30px;top:258px;color:#262626;letter-spacing:-0.35px;">200,00</div>
<div class="a" style="left:250px;top:278px;width:127px;height:26px;background:#fdfde6;"></div>
<div class="a" style="left:927px;top:278px;width:134px;height:26px;background:#bcdff8;"></div>
<div class="a" style="left:1px;top:304px;width:1060px;height:1px;background:#ececec;"></div>
<div class="a" style="left:34px;top:278px;width:1px;height:26px;background:#f3f3f3;"></div>
<div class="a" style="left:61px;top:278px;width:1px;height:26px;background:#f3f3f3;"></div>
<div class="a" style="left:10px;top:284px;width:15px;height:15px;background:#fff;border:1px solid #c6c6c6"></div>
<div class="t" style="left:71px;top:285px;color:#262626;letter-spacing:0.52px;">NK/M0/22/10/5</div>
<svg style="left:216px;top:281px;" width="17" height="20" viewBox="0 0 17 20"><path d="M0.8 0.8 H10.6 L16.2 6 V19.2 H0.8 Z" fill="#fff" stroke="#404040" stroke-width="1.5" stroke-linejoin="round"/><path d="M10.6 0.8 V5.6 H16.2" fill="none" stroke="#404040" stroke-width="1.4"/><path d="M4 5.6 H7.8" stroke="#7a7a7a" stroke-width="1"/><path d="M4 8.3 H12.8" stroke="#7a7a7a" stroke-width="1.6"/><rect x="3.3" y="10.5" width="10.5" height="6.6" fill="#fff" stroke="#454545" stroke-width="0.9"/><rect x="3.3" y="10.5" width="10.5" height="3.7" fill="#2f7fcf"/><path d="M8.55 10.5 V17.1" stroke="#454545" stroke-width="0.9"/></svg>
<div class="t" style="left:259px;top:285px;color:#262626;letter-spacing:-0.75px;">NK</div>
<div class="t" style="left:318px;top:285px;color:#262626;letter-spacing:-0.5px;">M0</div>
<div class="t" style="left:736px;top:285px;color:#262626;letter-spacing:0.1px;">000001</div>
<div class="t" style="left:815px;top:285px;color:#262626;letter-spacing:-0.1px;">Action.Bis</div>
<div class="t" style="right:30px;top:285px;color:#262626;letter-spacing:-0.35px;">200,00</div>
<div class="a" style="left:250px;top:305px;width:127px;height:25px;background:#fdfde6;"></div>
<div class="a" style="left:927px;top:305px;width:134px;height:25px;background:#bcdff8;"></div>
<div class="a" style="left:1px;top:330px;width:1060px;height:1px;background:#ececec;"></div>
<div class="a" style="left:34px;top:305px;width:1px;height:25px;background:#f3f3f3;"></div>
<div class="a" style="left:61px;top:305px;width:1px;height:25px;background:#f3f3f3;"></div>
<div class="a" style="left:10px;top:311px;width:15px;height:15px;background:#fff;border:1px solid #c6c6c6"></div>
<div class="t" style="left:71px;top:311px;color:#262626;letter-spacing:0.52px;">NK/M0/22/10/6</div>
<svg style="left:216px;top:308px;" width="17" height="20" viewBox="0 0 17 20"><path d="M0.8 0.8 H10.6 L16.2 6 V19.2 H0.8 Z" fill="#fff" stroke="#404040" stroke-width="1.5" stroke-linejoin="round"/><path d="M10.6 0.8 V5.6 H16.2" fill="none" stroke="#404040" stroke-width="1.4"/><path d="M4 5.6 H7.8" stroke="#7a7a7a" stroke-width="1"/><path d="M4 8.3 H12.8" stroke="#7a7a7a" stroke-width="1.6"/><rect x="3.3" y="10.5" width="10.5" height="6.6" fill="#fff" stroke="#454545" stroke-width="0.9"/><rect x="3.3" y="10.5" width="10.5" height="3.7" fill="#2f7fcf"/><path d="M8.55 10.5 V17.1" stroke="#454545" stroke-width="0.9"/></svg>
<div class="t" style="left:259px;top:311px;color:#262626;letter-spacing:-0.75px;">NK</div>
<div class="t" style="left:318px;top:311px;color:#262626;letter-spacing:-0.5px;">M0</div>
<div class="t" style="left:736px;top:311px;color:#262626;letter-spacing:0.1px;">000001</div>
<div class="t" style="left:815px;top:311px;color:#262626;letter-spacing:-0.1px;">Action.Bis</div>
<div class="t" style="right:30px;top:311px;color:#e84545;letter-spacing:-0.35px;">-2 000,00</div>
<div class="a" style="left:250px;top:331px;width:127px;height:25px;background:#fdfde6;"></div>
<div class="a" style="left:927px;top:331px;width:134px;height:25px;background:#bcdff8;"></div>
<div class="a" style="left:1px;top:356px;width:1060px;height:1px;background:#ececec;"></div>
<div class="a" style="left:34px;top:331px;width:1px;height:25px;background:#f3f3f3;"></div>
<div class="a" style="left:61px;top:331px;width:1px;height:25px;background:#f3f3f3;"></div>
<div class="a" style="left:10px;top:337px;width:15px;height:15px;background:#fff;border:1px solid #c6c6c6"></div>
<div class="t" style="left:71px;top:337px;color:#262626;letter-spacing:0.52px;">NK/M0/22/10/7</div>
<svg style="left:216px;top:334px;" width="17" height="20" viewBox="0 0 17 20"><path d="M0.8 0.8 H10.6 L16.2 6 V19.2 H0.8 Z" fill="#fff" stroke="#404040" stroke-width="1.5" stroke-linejoin="round"/><path d="M10.6 0.8 V5.6 H16.2" fill="none" stroke="#404040" stroke-width="1.4"/><path d="M4 5.6 H7.8" stroke="#7a7a7a" stroke-width="1"/><path d="M4 8.3 H12.8" stroke="#7a7a7a" stroke-width="1.6"/><rect x="3.3" y="10.5" width="10.5" height="6.6" fill="#fff" stroke="#454545" stroke-width="0.9"/><rect x="3.3" y="10.5" width="10.5" height="3.7" fill="#2f7fcf"/><path d="M8.55 10.5 V17.1" stroke="#454545" stroke-width="0.9"/></svg>
<div class="t" style="left:259px;top:337px;color:#262626;letter-spacing:-0.75px;">NK</div>
<div class="t" style="left:318px;top:337px;color:#262626;letter-spacing:-0.5px;">M0</div>
<div class="t" style="left:736px;top:337px;color:#262626;letter-spacing:0.1px;">000001</div>
<div class="t" style="left:815px;top:337px;color:#262626;letter-spacing:-0.1px;">Action.Bis</div>
<div class="t" style="right:30px;top:337px;color:#262626;letter-spacing:-0.35px;">2 000,00</div>
<div class="a" style="left:250px;top:357px;width:127px;height:26px;background:#fdfde6;"></div>
<div class="a" style="left:927px;top:357px;width:134px;height:26px;background:#bcdff8;"></div>
<div class="a" style="left:1px;top:383px;width:1060px;height:1px;background:#ececec;"></div>
<div class="a" style="left:34px;top:357px;width:1px;height:26px;background:#f3f3f3;"></div>
<div class="a" style="left:61px;top:357px;width:1px;height:26px;background:#f3f3f3;"></div>
<div class="a" style="left:10px;top:363px;width:15px;height:15px;background:#fff;border:1px solid #c6c6c6"></div>
<div class="t" style="left:71px;top:364px;color:#262626;letter-spacing:0.52px;">NK/M0/22/10/8</div>
<svg style="left:216px;top:360px;" width="17" height="20" viewBox="0 0 17 20"><path d="M0.8 0.8 H10.6 L16.2 6 V19.2 H0.8 Z" fill="#fff" stroke="#404040" stroke-width="1.5" stroke-linejoin="round"/><path d="M10.6 0.8 V5.6 H16.2" fill="none" stroke="#404040" stroke-width="1.4"/><path d="M4 5.6 H7.8" stroke="#7a7a7a" stroke-width="1"/><path d="M4 8.3 H12.8" stroke="#7a7a7a" stroke-width="1.6"/><rect x="3.3" y="10.5" width="10.5" height="6.6" fill="#fff" stroke="#454545" stroke-width="0.9"/><rect x="3.3" y="10.5" width="10.5" height="3.7" fill="#2f7fcf"/><path d="M8.55 10.5 V17.1" stroke="#454545" stroke-width="0.9"/></svg>
<div class="t" style="left:259px;top:364px;color:#262626;letter-spacing:-0.75px;">NK</div>
<div class="t" style="left:318px;top:364px;color:#262626;letter-spacing:-0.5px;">M0</div>
<div class="t" style="left:736px;top:364px;color:#262626;letter-spacing:0.1px;">000001</div>
<div class="t" style="left:815px;top:364px;color:#262626;letter-spacing:-0.1px;">Action.Bis</div>
<div class="t" style="right:30px;top:364px;color:#262626;letter-spacing:-0.35px;">0,00</div>
<div class="a" style="left:250px;top:384px;width:127px;height:25px;background:#fdfde6;"></div>
<div class="a" style="left:927px;top:384px;width:134px;height:25px;background:#bcdff8;"></div>
<div class="a" style="left:1px;top:409px;width:1060px;height:1px;background:#ececec;"></div>
<div class="a" style="left:34px;top:384px;width:1px;height:25px;background:#f3f3f3;"></div>
<div class="a" style="left:61px;top:384px;width:1px;height:25px;background:#f3f3f3;"></div>
<div class="a" style="left:10px;top:390px;width:15px;height:15px;background:#fff;border:1px solid #c6c6c6"></div>
<div class="t" style="left:71px;top:390px;color:#262626;letter-spacing:0.52px;">NK/M0/22/10/9</div>
<svg style="left:216px;top:387px;" width="17" height="20" viewBox="0 0 17 20"><path d="M0.8 0.8 H10.6 L16.2 6 V19.2 H0.8 Z" fill="#fff" stroke="#404040" stroke-width="1.5" stroke-linejoin="round"/><path d="M10.6 0.8 V5.6 H16.2" fill="none" stroke="#404040" stroke-width="1.4"/><path d="M4 5.6 H7.8" stroke="#7a7a7a" stroke-width="1"/><path d="M4 8.3 H12.8" stroke="#7a7a7a" stroke-width="1.6"/><rect x="3.3" y="10.5" width="10.5" height="6.6" fill="#fff" stroke="#454545" stroke-width="0.9"/><rect x="3.3" y="10.5" width="10.5" height="3.7" fill="#2f7fcf"/><path d="M8.55 10.5 V17.1" stroke="#454545" stroke-width="0.9"/></svg>
<div class="t" style="left:259px;top:390px;color:#262626;letter-spacing:-0.75px;">NK</div>
<div class="t" style="left:318px;top:390px;color:#262626;letter-spacing:-0.5px;">M0</div>
<div class="t" style="left:736px;top:390px;color:#262626;letter-spacing:0.1px;">000001</div>
<div class="t" style="left:815px;top:390px;color:#262626;letter-spacing:-0.1px;">Action.Bis</div>
<div class="t" style="right:30px;top:390px;color:#262626;letter-spacing:-0.35px;">2 000,00</div>
<div class="a" style="left:250px;top:410px;width:127px;height:25px;background:#fdfde6;"></div>
<div class="a" style="left:927px;top:410px;width:134px;height:25px;background:#bcdff8;"></div>
<div class="a" style="left:1px;top:435px;width:1060px;height:1px;background:#ececec;"></div>
<div class="a" style="left:34px;top:410px;width:1px;height:25px;background:#f3f3f3;"></div>
<div class="a" style="left:61px;top:410px;width:1px;height:25px;background:#f3f3f3;"></div>
<div class="a" style="left:10px;top:416px;width:15px;height:15px;background:#fff;border:1px solid #c6c6c6"></div>
<div class="t" style="left:71px;top:416px;color:#262626;letter-spacing:0.52px;">NK/M0/22/10/10</div>
<svg style="left:216px;top:413px;" width="17" height="20" viewBox="0 0 17 20"><path d="M0.8 0.8 H10.6 L16.2 6 V19.2 H0.8 Z" fill="#fff" stroke="#404040" stroke-width="1.5" stroke-linejoin="round"/><path d="M10.6 0.8 V5.6 H16.2" fill="none" stroke="#404040" stroke-width="1.4"/><path d="M4 5.6 H7.8" stroke="#7a7a7a" stroke-width="1"/><path d="M4 8.3 H12.8" stroke="#7a7a7a" stroke-width="1.6"/><rect x="3.3" y="10.5" width="10.5" height="6.6" fill="#fff" stroke="#454545" stroke-width="0.9"/><rect x="3.3" y="10.5" width="10.5" height="3.7" fill="#2f7fcf"/><path d="M8.55 10.5 V17.1" stroke="#454545" stroke-width="0.9"/></svg>
<div class="t" style="left:259px;top:416px;color:#262626;letter-spacing:-0.75px;">NK</div>
<div class="t" style="left:318px;top:416px;color:#262626;letter-spacing:-0.5px;">M0</div>
<div class="t" style="left:736px;top:416px;color:#262626;letter-spacing:0.1px;">000001</div>
<div class="t" style="left:815px;top:416px;color:#262626;letter-spacing:-0.1px;">Action.Bis</div>
<div class="t" style="right:30px;top:416px;color:#262626;letter-spacing:-0.35px;">2 000,00</div>
<div class="a" style="left:250px;top:436px;width:127px;height:25px;background:#fdfde6;"></div>
<div class="a" style="left:927px;top:436px;width:134px;height:25px;background:#bcdff8;"></div>
<div class="a" style="left:1px;top:461px;width:1060px;height:1px;background:#ececec;"></div>
<div class="a" style="left:34px;top:436px;width:1px;height:25px;background:#f3f3f3;"></div>
<div class="a" style="left:61px;top:436px;width:1px;height:25px;background:#f3f3f3;"></div>
<div class="a" style="left:10px;top:442px;width:15px;height:15px;background:#fff;border:1px solid #c6c6c6"></div>
<div class="t" style="left:71px;top:442px;color:#262626;letter-spacing:0.52px;">NK/M0/22/10/11</div>
<svg style="left:216px;top:439px;" width="17" height="20" viewBox="0 0 17 20"><path d="M0.8 0.8 H10.6 L16.2 6 V19.2 H0.8 Z" fill="#fff" stroke="#404040" stroke-width="1.5" stroke-linejoin="round"/><path d="M10.6 0.8 V5.6 H16.2" fill="none" stroke="#404040" stroke-width="1.4"/><path d="M4 5.6 H7.8" stroke="#7a7a7a" stroke-width="1"/><path d="M4 8.3 H12.8" stroke="#7a7a7a" stroke-width="1.6"/><rect x="3.3" y="10.5" width="10.5" height="6.6" fill="#fff" stroke="#454545" stroke-width="0.9"/><rect x="3.3" y="10.5" width="10.5" height="3.7" fill="#2f7fcf"/><path d="M8.55 10.5 V17.1" stroke="#454545" stroke-width="0.9"/></svg>
<div class="t" style="left:259px;top:442px;color:#262626;letter-spacing:-0.75px;">NK</div>
<div class="t" style="left:318px;top:442px;color:#262626;letter-spacing:-0.5px;">M0</div>
<div class="t" style="left:736px;top:442px;color:#262626;letter-spacing:0.1px;">000002</div>
<div class="t" style="left:815px;top:442px;color:#262626;letter-spacing:-0.35px;">Soney Polska</div>
<div class="t" style="right:30px;top:442px;color:#262626;letter-spacing:-0.35px;">651,90</div>
<div class="a" style="left:1px;top:200px;width:1060px;height:1px;background:#5a5a5a;"></div>
<div class="a" style="left:62px;top:200px;width:134px;height:26px;background:transparent;border:2px solid #0f6fb5"></div>

<!-- FOOTER -->
<div class="a" style="left:1px;top:527px;width:1060px;height:1px;background:#c9c9c9;"></div>
<div class="a" style="left:1px;top:528px;width:1060px;height:38px;background:#f9f8f7;"></div>
<div class="a" style="left:927px;top:528px;width:134px;height:38px;background:#bcdff8;"></div>
<div class="a" style="left:61px;top:528px;width:1px;height:38px;background:#ead8d8;"></div>
<div class="a" style="left:195px;top:528px;width:1px;height:38px;background:#ead8d8;"></div>
<div class="a" style="left:249px;top:528px;width:1px;height:38px;background:#ead8d8;"></div>
<div class="a" style="left:308px;top:528px;width:1px;height:38px;background:#ead8d8;"></div>
<div class="a" style="left:376px;top:528px;width:1px;height:38px;background:#ead8d8;"></div>
<div class="a" style="left:430px;top:528px;width:1px;height:38px;background:#ead8d8;"></div>
<div class="a" style="left:549px;top:528px;width:1px;height:38px;background:#ead8d8;"></div>
<div class="a" style="left:726px;top:528px;width:1px;height:38px;background:#ead8d8;"></div>
<div class="a" style="left:804px;top:528px;width:1px;height:38px;background:#ead8d8;"></div>
<div class="a" style="left:926px;top:528px;width:1px;height:38px;background:#ead8d8;"></div>
<div class="a" style="left:1036px;top:528px;width:1px;height:38px;background:#ead8d8;"></div>
<div class="a" style="left:1px;top:566px;width:1060px;height:1px;background:#e4e4e4;"></div>
<div class="t" style="right:33px;top:529px;color:#1f1f1f;letter-spacing:-0.2px;font-weight:700;">700,00</div>
<div class="t" style="right:33px;top:548px;color:#1f1f1f;letter-spacing:0px;font-weight:700;">7 751,90</div>

<!-- SCROLLBAR -->
<svg style="left:5px;top:570px;" width="8" height="12" viewBox="0 0 8 12"><path d="M6 1 L1.5 6 L6 11" fill="none" stroke="#c8c8c8" stroke-width="1.1"/></svg>
<div class="a" style="left:15px;top:571px;width:777px;height:9px;background:#e3e3e3;"></div>
<svg style="left:1051px;top:570px;" width="8" height="12" viewBox="0 0 8 12"><path d="M2 1 L6.5 6 L2 11" fill="none" stroke="#c8c8c8" stroke-width="1.1"/></svg>

<!-- BOTTOM TABS -->
<div class="a" style="left:1px;top:584px;width:1061px;height:1px;background:#e2e2e2;"></div>
<div class="a" style="left:1px;top:585px;width:1061px;height:37px;background:#f9f8f7;"></div>
<div class="a" style="left:1px;top:622px;width:1061px;height:1px;background:#e2e2e2;"></div>
<div class="a" style="left:1px;top:623px;width:1061px;height:3px;background:#fff;"></div>
<div class="a" style="left:526px;top:587px;width:10px;height:1px;background:transparent;border-top:1px dashed #b8b8b8"></div>
<div class="a" style="left:19px;top:597px;width:2px;height:2px;background:#333;"></div>
<div class="a" style="left:19px;top:603px;width:2px;height:2px;background:#333;"></div>
<div class="a" style="left:19px;top:608px;width:2px;height:2px;background:#333;"></div>
<div class="t" style="left:57px;top:597px;color:#212121;letter-spacing:-0.85px;font-weight:700;">Dowód</div>
<div class="a" style="left:57px;top:618px;width:45px;height:4px;background:#0a84d2;"></div>
<div class="t" style="left:144px;top:597px;color:#444;letter-spacing:0px;">Dowód z wymiarami kontrolingowymi</div>
<div class="t" style="left:419px;top:597px;color:#444;letter-spacing:-0.1px;">Historia operacji</div>
<div class="t" style="left:559px;top:597px;color:#444;letter-spacing:-0.1px;">Dowody sprzężone</div>

<!-- MENU -->
<div class="a" style="left:350px;top:104px;width:392px;height:354px;background:#fff;border:1px solid #c6c6c6;z-index:10"></div>
<div class="a" style="left:358px;top:350px;width:374px;height:24px;background:#deedf8;z-index:11;"></div>
<div class="t" style="left:397px;top:118px;color:#262626;letter-spacing:0.05px;z-index:11;">Stornuj/kopiuj dowód</div>
<div class="t" style="left:658px;top:118px;color:#8a8a8a;letter-spacing:-0.3px;z-index:11;">Ctrl+R</div>
<svg style="left:715px;top:116px;z-index:11;" width="10" height="15" viewBox="0 0 10 15"><path d="M1.5 0.5 H8.5 V1.5 L7.3 2.5 V6.5 L9.5 8.5 V9.5 H0.5 V8.5 L2.7 6.5 V2.5 L1.5 1.5 Z" fill="#1670b8"/><path d="M5 9.5 V14.8" stroke="#1670b8" stroke-width="1.3"/></svg>
<div class="a" style="left:388px;top:143px;width:348px;height:1px;background:#e6e6e6;z-index:11;"></div>
<svg style="left:365px;top:151px;z-index:11;" width="22" height="21" viewBox="0 0 22 21"><path d="M9 14.5 H1 V0.5 H8 L11 3.5 V5" fill="#fff" stroke="#c8c8c8" stroke-width="1"/><path d="M9 5.5 H17 L20.5 9 V19.5 H9 Z" fill="#fff" stroke="#c8c8c8" stroke-width="1"/><path d="M17 5.5 V9 H20.5" fill="none" stroke="#c8c8c8" stroke-width="1"/><path d="M3 4 H5 M3 7 H5 M3 10 H5" stroke="#a8c8e8" stroke-width="1"/><path d="M11 11 H14 M11 13.5 H18.5 M11 16 H18.5" stroke="#a8c8e8" stroke-width="1.1"/></svg>
<div class="t" style="left:397px;top:156px;color:#b4b4b4;letter-spacing:-0.28px;z-index:11;">Generuj wzorce RM</div>
<svg style="left:715px;top:154px;z-index:11;" width="10" height="15" viewBox="0 0 10 15"><path d="M1.5 0.5 H8.5 V1.5 L7.3 2.5 V6.5 L9.5 8.5 V9.5 H0.5 V8.5 L2.7 6.5 V2.5 L1.5 1.5 Z" fill="#1670b8"/><path d="M5 9.5 V14.8" stroke="#1670b8" stroke-width="1.3"/></svg>
<svg style="left:366px;top:181px;z-index:11;" width="22" height="21" viewBox="0 0 22 21"><path d="M8.5 19.3 H2.3 C1.6 19.3 1.2 18.9 1.2 18.2 V1.8 C1.2 1.1 1.6 0.7 2.3 0.7 H12.8 C13.5 0.7 13.9 1.1 13.9 1.8 V9" fill="none" stroke="#c4c4c4" stroke-width="1.3"/><circle cx="14.6" cy="15" r="5.3" fill="#e9aba4"/><path d="M12.5 12.9 L16.7 17.1 M16.7 12.9 L12.5 17.1" stroke="#fff" stroke-width="1.4"/></svg>
<div class="t" style="left:397px;top:186px;color:#b4b4b4;letter-spacing:-0.15px;z-index:11;">Kasuj wzorce RM</div>
<svg style="left:715px;top:184px;z-index:11;" width="10" height="15" viewBox="0 0 10 15"><path d="M1.5 0.5 H8.5 V1.5 L7.3 2.5 V6.5 L9.5 8.5 V9.5 H0.5 V8.5 L2.7 6.5 V2.5 L1.5 1.5 Z" fill="#1670b8"/><path d="M5 9.5 V14.8" stroke="#1670b8" stroke-width="1.3"/></svg>
<div class="a" style="left:388px;top:211px;width:348px;height:1px;background:#e6e6e6;z-index:11;"></div>
<div class="t" style="left:397px;top:223px;color:#262626;letter-spacing:-0.12px;z-index:11;">Pobierz szablon do importu linijek dowodu z XLS</div>
<svg style="left:365px;top:249px;z-index:11;" width="22" height="20" viewBox="0 0 22 20"><path d="M6.5 5 V1 H19.5 V18.5 H6.5 V14" fill="none" stroke="#333" stroke-width="1.2"/><path d="M1 10 H9 M6 6.5 L9.5 10 L6 13.5" fill="none" stroke="#2aa36a" stroke-width="2.2"/></svg>
<div class="t" style="left:397px;top:253px;color:#262626;letter-spacing:-0.12px;z-index:11;">Importuj dowód z pliku &nbsp;XLS</div>
<div class="a" style="left:388px;top:278px;width:348px;height:1px;background:#e6e6e6;z-index:11;"></div>
<div class="t" style="left:397px;top:290px;color:#262626;letter-spacing:-0.12px;z-index:11;">Rozbij wymiary na podstawie kluczy kosztowych</div>
<div class="t" style="left:397px;top:318px;color:#262626;letter-spacing:-0.12px;z-index:11;">Odśwież krąg kosztowy</div>
<div class="a" style="left:388px;top:344px;width:348px;height:1px;background:#e6e6e6;z-index:11;"></div>
<div class="t" style="left:397px;top:355px;color:#262626;letter-spacing:-0.25px;z-index:11;">Generuj e-dokument</div>
<svg style="left:714px;top:353px;z-index:11;" width="16" height="16" viewBox="0 0 16 16"><g transform="rotate(45 8 8)"><path d="M4.5 0.5 H11.5 V1.5 L10.3 2.5 V6.5 L12.5 8.5 V9.5 H3.5 V8.5 L5.7 6.5 V2.5 L4.5 1.5 Z" fill="#a0a0a0"/><path d="M8 9.5 V15" stroke="#a0a0a0" stroke-width="1.3"/></g></svg>
<div class="t" style="left:397px;top:384px;color:#262626;letter-spacing:-0.12px;z-index:11;">Generuj e-dokument (podgląd)</div>
<div class="a" style="left:388px;top:410px;width:348px;height:1px;background:#e6e6e6;z-index:11;"></div>
<div class="t" style="left:397px;top:422px;color:#b4b4b4;letter-spacing:-0.12px;z-index:11;">Odblokuj do usunięcia</div>
<div class="a" style="left:367px;top:348px;width:320px;height:60px;background:transparent;z-index:12;border:2px solid #f5101a;border-radius:7px;box-shadow:inset 0 1px 8px rgba(0,0,0,0.32);border-radius:8px"></div>
</body></html>
